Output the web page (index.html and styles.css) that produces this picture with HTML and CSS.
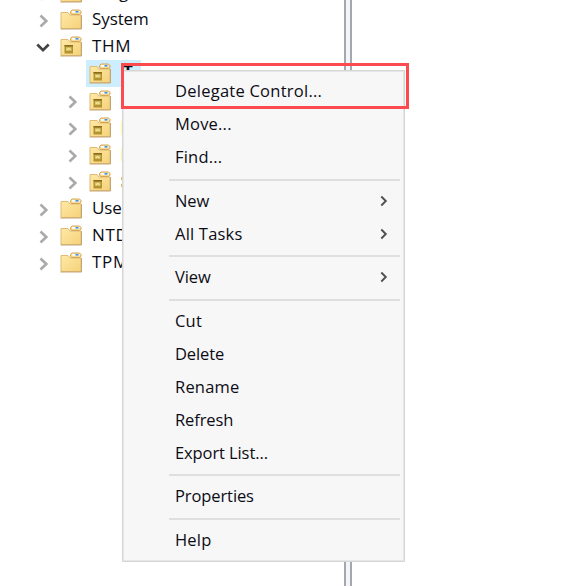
FILE: index.html
```html
<!DOCTYPE html>
<html lang="en">
<head>
<meta charset="utf-8">
<title>Directory tree</title>
<link rel="stylesheet" href="styles.css">
</head>
<body>
<svg class="defs" width="0" height="0">
  <defs>
    <linearGradient id="paper" x1="0" y1="0" x2="1" y2="1">
      <stop offset="0" stop-color="#ffe9a6"/><stop offset="1" stop-color="#f5d27a"/>
    </linearGradient>
    <symbol id="folder" viewBox="0 0 22 21">
      <path d="M1 3.500h7l2 2.500h11v13.500H1z" fill="url(#paper)" stroke="#dfbb74"/>
      <path d="M10.500 4V2.500L12 1h7.500L21 2.500v2L19.500 5.500h-8z" fill="#f3d99a" stroke="#d6a653"/>
      <path d="M12 2.800h7.500" stroke="#fff" stroke-width="1.800"/>
      <path d="M15.500 2.800h3" stroke="#3f93d4" stroke-width="1.600"/>
      <path d="M.5 20h21V6" fill="none" stroke="#c5a574"/>
    </symbol>
    <symbol id="unit" viewBox="0 0 22 21">
      <use href="#folder"/>
      <path d="M4.500 9h8.500v8.500h-8.500z" fill="#b3922f"/>
      <path d="M4.500 9.700h8.500" stroke="#8b6b1d" stroke-width="1.400"/>
      <path d="M6 11.300h5.500v3.500H6z" fill="#dac970"/>
      <path d="M7 14l1.700-1.800 1.700 1.800" fill="none" stroke="#fff2ac"/>
    </symbol>
    <symbol id="right" viewBox="0 0 10 14"><path d="M1.500 1.500L7.300 7l-5.800 5.500" fill="none" stroke="#aaa" stroke-width="2.600"/></symbol>
    <symbol id="down" viewBox="0 0 14 10"><path d="M1.300 1.500L7 7.200l5.700-5.700" fill="none" stroke="#444" stroke-width="2.700"/></symbol>
    <symbol id="sub" viewBox="0 0 8 12"><path d="M1.300 1.500L5.800 6l-4.500 4.500" fill="none" stroke="#505050" stroke-width="1.900"/></symbol>
  </defs>
</svg>
<main class="window">
  <section class="tree">
    <div class="row"><svg class="arrow"><use href="#right"/></svg><svg class="icon"><use href="#folder"/></svg><span>Program Data</span></div>
    <div class="row"><svg class="arrow"><use href="#right"/></svg><svg class="icon"><use href="#folder"/></svg><span>System</span></div>
    <div class="row"><svg class="arrow open"><use href="#down"/></svg><svg class="icon"><use href="#unit"/></svg><span class="caps">THM</span></div>
    <div class="row child"><i class="arrow"></i><div class="selected"><svg class="icon"><use href="#unit"/></svg><b class="name">T</b></div></div>
    <div class="row child"><svg class="arrow"><use href="#right"/></svg><svg class="icon"><use href="#unit"/></svg></div>
    <div class="row child"><svg class="arrow"><use href="#right"/></svg><svg class="icon"><use href="#unit"/></svg><i class="mark"></i></div>
    <div class="row child"><svg class="arrow"><use href="#right"/></svg><svg class="icon"><use href="#unit"/></svg><i class="mark"></i></div>
    <div class="row child"><svg class="arrow"><use href="#right"/></svg><svg class="icon"><use href="#unit"/></svg><i class="mark dots"></i></div>
    <div class="row"><svg class="arrow"><use href="#right"/></svg><svg class="icon"><use href="#folder"/></svg><span>Users</span></div>
    <div class="row"><svg class="arrow"><use href="#right"/></svg><svg class="icon"><use href="#folder"/></svg><span class="caps">NTDS</span></div>
    <div class="row"><svg class="arrow"><use href="#right"/></svg><svg class="icon"><use href="#folder"/></svg><span class="caps">TPM</span></div>
  </section>
  <div class="splitter"></div>
  <nav class="menu">
    <div class="item"><span class="delegate">Delegate Control...</span></div>
    <div class="item"><span class="loose">Move...</span></div>
    <div class="item"><span class="loose">Find...</span></div>
    <hr>
    <div class="item"><span>New</span><svg class="sub"><use href="#sub"/></svg></div>
    <div class="item"><span class="loose">All Tasks</span><svg class="sub"><use href="#sub"/></svg></div>
    <hr>
    <div class="item"><span>View</span><svg class="sub"><use href="#sub"/></svg></div>
    <hr>
    <div class="item"><span class="loose">Cut</span></div>
    <div class="item"><span>Delete</span></div>
    <div class="item"><span class="loose">Rename</span></div>
    <div class="item"><span>Refresh</span></div>
    <div class="item"><span>Export List...</span></div>
    <hr>
    <div class="item"><span>Properties</span></div>
    <hr>
    <div class="item"><span class="loose">Help</span></div>
  </nav>
  <div class="highlight"></div>
</main>
</body>
</html>
```
FILE: styles.css
```css
* { box-sizing: border-box; }
body { margin: 0; background: #fff; color: #0c0c14; font: 17px/27px "Open Sans", "Noto Sans", sans-serif; letter-spacing: -0.1px; }
.defs { position: absolute; }
.window { position: relative; display: flex; width: 568px; height: 586px; overflow: hidden; }
.tree { width: 344px; height: 586px; flex: none; margin-top: -21px; }
.row { display: flex; align-items: center; height: 27px; padding-left: 39px; white-space: nowrap; }
.row span { padding-bottom: 2px; }
.caps { letter-spacing: 0.7px; }
.child { padding-left: 67.500px; }
.arrow { width: 10px; height: 14px; margin-right: 11px; margin-top: 3px; flex: none; }
.arrow.open { width: 14px; height: 10px; margin-left: -3px; margin-right: 10px; }
.icon { width: 22px; height: 21px; flex: none; margin-right: 10px; }
.child > .arrow { margin-right: 11.500px; }
.child > i.arrow { margin-right: 8.500px; }
.selected { display: flex; align-items: center; width: 55px; height: 27px; padding-left: 3px; background: #cceeff; }
.name { margin: -3px 0 0 2px; line-height: 20px; }
.mark { width: 3px; height: 14px; background: #fffbae; }
.dots { height: 10px; background: linear-gradient(#f5b45f 3px, transparent 3px 7px, #f5b45f 7px); }
.splitter { width: 8px; height: 586px; flex: none; border: solid #a3a8b0; border-width: 0 2px; background: #f4f5f7; }
.menu { position: absolute; left: 122px; top: 70px; width: 283px; height: 492px; padding: 4px 4px 4px 46px; border: 1px solid #d6d6d6; box-shadow: inset 0 0 0 1px #e6e6e6; background: #f7f7f7; font-size: 16.500px; }
.item { display: flex; align-items: center; justify-content: space-between; height: 33px; padding: 0 12px 0 6px; }
.item span { padding-bottom: 2px; }
.loose { letter-spacing: 0.200px; }
.delegate { letter-spacing: 0.250px; }
.sub { width: 8px; height: 12px; margin-top: -1px; }
hr { height: 2px; margin: 4.500px 0 4px; border: 0; background: #dfdfdf; }
.menu hr { margin-bottom: 4px; }
.highlight { position: absolute; left: 121px; top: 63px; width: 288px; height: 46px; border: 3px solid #fb4b4e; }
```
